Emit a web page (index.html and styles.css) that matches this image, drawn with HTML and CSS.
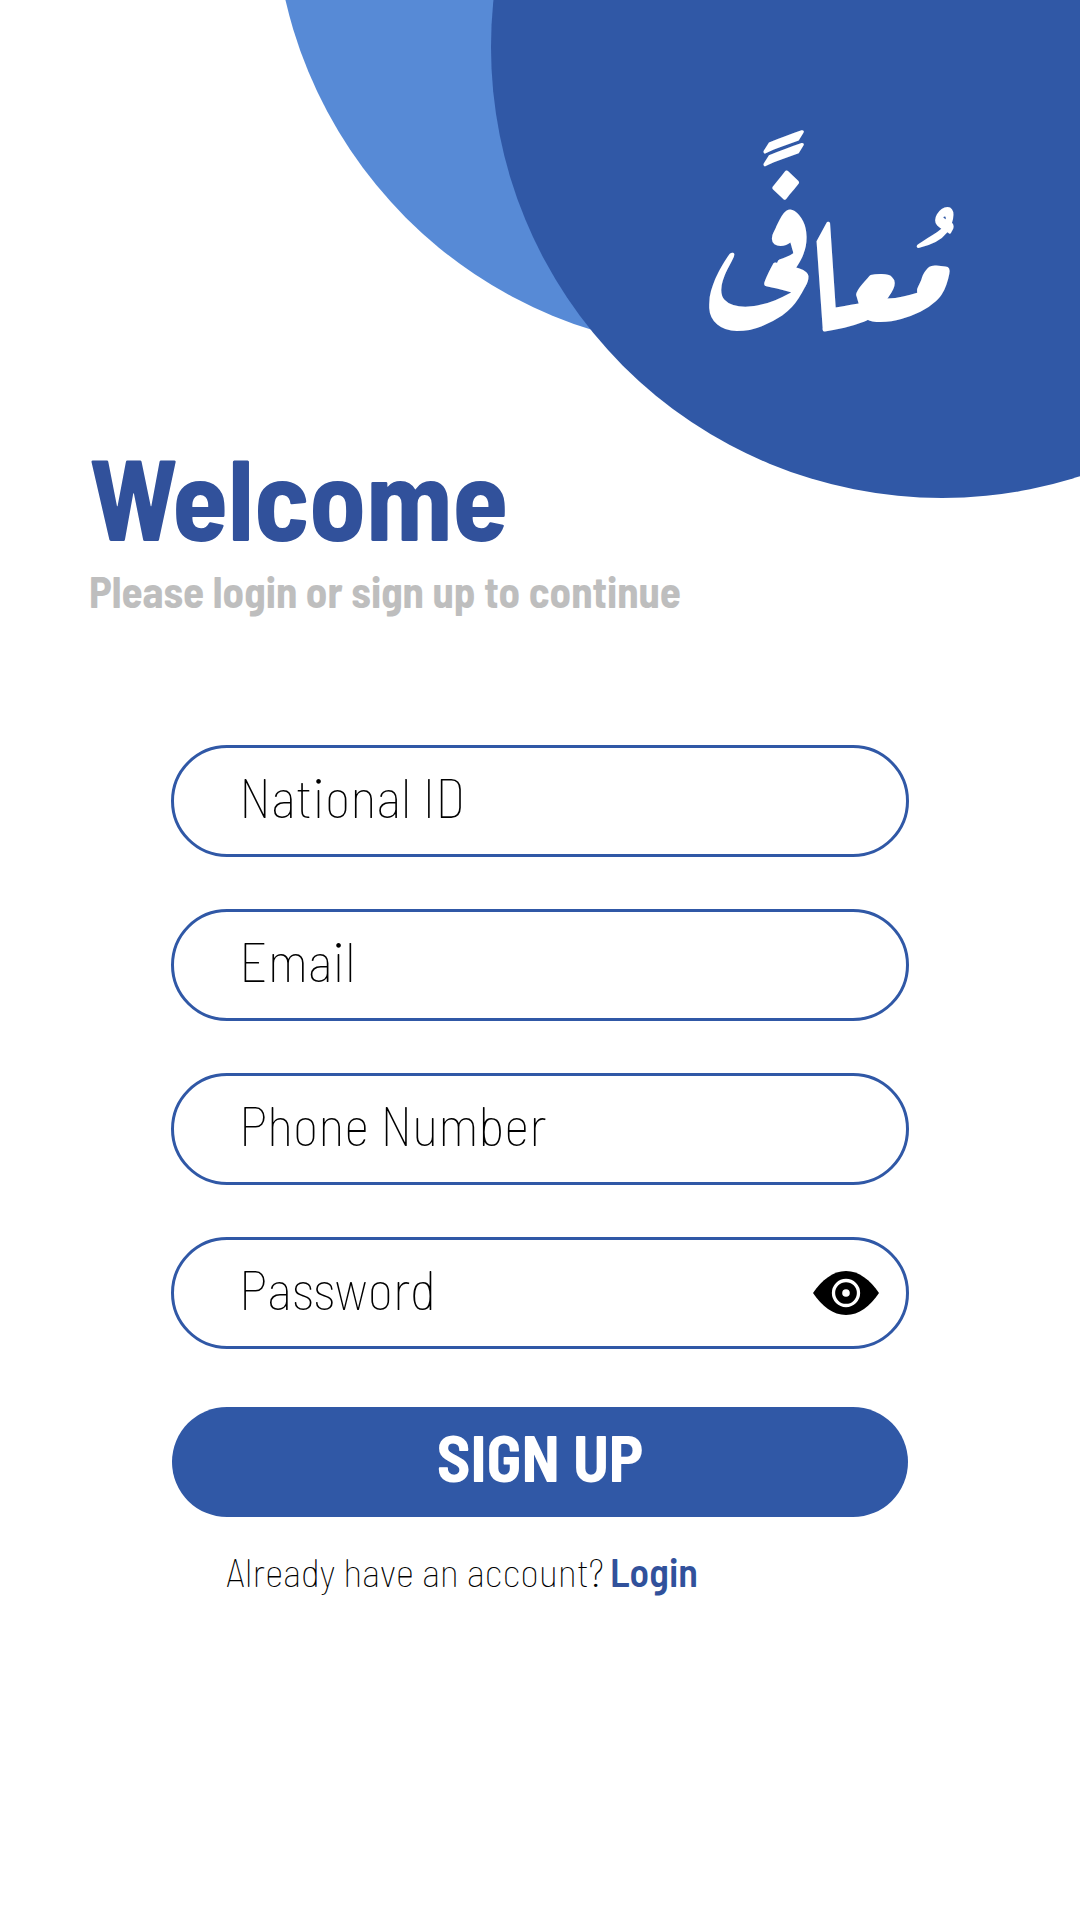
FILE: index.html
```html
<!DOCTYPE html>
<html lang="en">
<head>
  <meta charset="utf-8">
  <meta name="viewport" content="width=device-width, initial-scale=1">
  <title>Sign up</title>
  <link rel="stylesheet" href="styles.css">
</head>
<body>
  <div class="page">
    <svg class="backdrop" viewBox="0 0 800 500" aria-hidden="true">
      <circle cx="445" cy="-101" r="451" fill="#578ad6"/>
      <circle cx="662" cy="47" r="451" fill="#3058a6"/>
    </svg>

    <header class="brand">
      <span class="brand-name" lang="ar" dir="rtl">مُعافًى</span>
    </header>

    <main>
      <div class="intro">
        <h1 class="title">Welcome</h1>
        <p class="subtitle">Please login or sign up to continue</p>
      </div>

      <form class="form">
        <input class="field" type="text" name="national-id" placeholder="National ID" aria-label="National ID">
        <input class="field" type="email" name="email" placeholder="Email" aria-label="Email">
        <input class="field" type="tel" name="phone" placeholder="Phone Number" aria-label="Phone Number">
        <div class="password">
          <input class="field" type="password" name="password" placeholder="Password" aria-label="Password">
          <button class="reveal" type="button" aria-label="Show password">
            <svg class="eye" viewBox="0 0 66 44" aria-hidden="true">
              <path d="M0 22C9 9 20 0 33 0S57 9 66 22C57 35 46 44 33 44S9 35 0 22Z"/>
              <circle cx="33" cy="22" r="12.5" fill="none" stroke="#fff" stroke-width="3.3"/>
              <circle cx="33" cy="22" r="3.8" fill="#fff"/>
            </svg>
          </button>
        </div>
        <button class="submit" type="submit">SIGN UP</button>
        <p class="switch"><span>Already have an account?</span> <a class="login" href="#login">Login</a></p>
      </form>
    </main>
  </div>
</body>
</html>
```
FILE: styles.css
```css
* {
  box-sizing: border-box;
}

body {
  margin: 0;
  background: #fff;
  color: #000;
  font-family: "Barlow Semi Condensed", "Roboto Condensed", Roboto, sans-serif;
}

.page {
  position: relative;
  min-height: 100vh;
  overflow: hidden;
}

/* Overlapping circles behind the brand */
.backdrop {
  position: absolute;
  top: 0;
  right: 0;
  width: 800px;
  height: 500px;
}

.brand {
  position: relative;
  display: flex;
  justify-content: flex-end;
  padding: 154px 126px 0 0;
  height: 440px;
}

.brand-name {
  color: #fff;
  font-family: "Aref Ruqaa", "Noto Sans Arabic", "DejaVu Sans", sans-serif;
  font-size: 159px;
  font-weight: 700;
  line-height: 200px;
}

.intro {
  position: relative;
  padding: 0 89px;
}

.title {
  margin: 0;
  color: #31519b;
  font-size: 114px;
  font-weight: 700;
  line-height: 112px;
}

.subtitle {
  margin: 11px 0 0;
  color: #bebebe;
  font-size: 43px;
  font-weight: 700;
  line-height: 56px;
}

.form {
  display: flex;
  flex-direction: column;
  gap: 52px;
  padding: 126px 171px 0;
}

.field {
  width: 100%;
  height: 112px;
  padding: 0 0 10px 65px;
  border: 3px solid #3058a6;
  border-radius: 56px;
  background: none;
  color: #000;
  font-family: inherit;
  font-size: 55px;
  font-weight: 100;
}

.field::placeholder {
  color: #000;
  opacity: 1;
}

.password {
  display: flex;
  position: relative;
}

.password .field {
  padding-right: 112px;
}

.reveal {
  position: absolute;
  top: 0;
  right: 30px;
  bottom: 0;
  display: flex;
  align-items: center;
  padding: 0;
  border: 0;
  background: none;
}

.eye {
  width: 66px;
  height: 44px;
}

.submit {
  height: 110px;
  margin: 6px 1px 0;
  padding: 0 0 12px;
  border: 0;
  border-radius: 55px;
  background: #3058a6;
  color: #fff;
  font-family: inherit;
  font-size: 65px;
  font-weight: 700;
}

.switch {
  display: flex;
  flex-wrap: wrap;
  column-gap: 6px;
  margin: -22px 0 0;
  padding: 0 55px;
  font-size: 40px;
  font-weight: 100;
  line-height: 48px;
}

.login {
  color: #31519b;
  font-weight: 600;
  text-decoration: none;
}
```
